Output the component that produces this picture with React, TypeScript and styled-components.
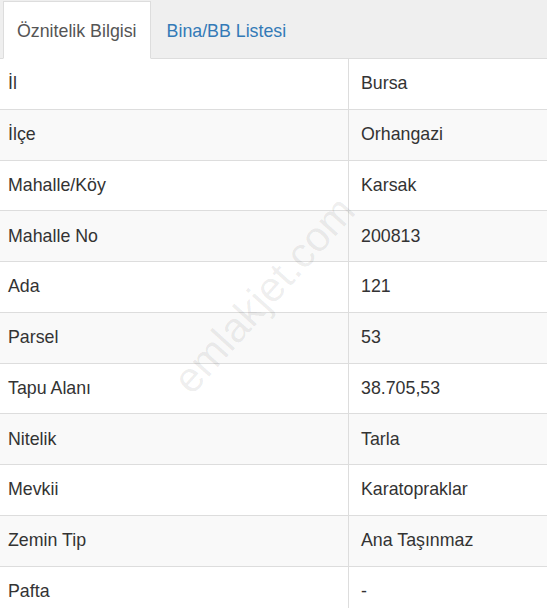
import React from "react";
import styled, { createGlobalStyle } from "styled-components";

const Global = createGlobalStyle`
  html, body { margin: 0; padding: 0; background: #fff; }
  body { font-family: "Liberation Sans", Arial, sans-serif; color: #333; }
`;

const Page = styled.div`
  position: relative;
  width: 547px;
  height: 608px;
  overflow: hidden;
  background: #fff;
`;

const TabBar = styled.div`
  display: flex;
  align-items: flex-end;
  height: 59px;
  padding: 0 0 0 3px;
  background: #efefef;
  border-bottom: 1px solid #ddd;
  box-sizing: border-box;
`;

const Tab = styled.div<{ $active?: boolean }>`
  height: ${(p) => (p.$active ? "58px" : "56px")};
  box-sizing: border-box;
  display: flex;
  align-items: center;
  padding: 2px 13px 0 ${(p) => (p.$active ? "13px" : "15px")};
  font-size: 17.8px;
  margin-bottom: ${(p) => (p.$active ? "-1px" : "0")};
  background: ${(p) => (p.$active ? "#fff" : "transparent")};
  color: ${(p) => (p.$active ? "#555" : "#337ab7")};
  border: 1px solid ${(p) => (p.$active ? "#ddd" : "transparent")};
  border-bottom-color: ${(p) => (p.$active ? "#fff" : "transparent")};
`;

const Table = styled.div`
  display: grid;
  grid-template-columns: 348px 1fr;
`;

const Cell = styled.div<{ $odd: boolean; $value?: boolean }>`
  height: 50.75px;
  box-sizing: border-box;
  display: flex;
  align-items: center;
  padding-left: ${(p) => (p.$value ? "12px" : "8px")};
  font-size: 17.8px;
  color: #333;
  background: ${(p) => (p.$odd ? "#f9f9f9" : "#fff")};
  border-bottom: 1px solid #ddd;
  border-left: ${(p) => (p.$value ? "1px solid #ddd" : "none")};
`;

const Watermark = styled.div`
  position: absolute;
  left: 264px;
  top: 295px;
  transform: translate(-50%, -50%) rotate(-48deg);
  font-size: 42px;
  color: rgba(0, 0, 0, 0.07);
  white-space: nowrap;
  pointer-events: none;
  font-family: "Liberation Sans", Arial, sans-serif;
`;

const rows: [string, string][] = [
  ["İl", "Bursa"],
  ["İlçe", "Orhangazi"],
  ["Mahalle/Köy", "Karsak"],
  ["Mahalle No", "200813"],
  ["Ada", "121"],
  ["Parsel", "53"],
  ["Tapu Alanı", "38.705,53"],
  ["Nitelik", "Tarla"],
  ["Mevkii", "Karatopraklar"],
  ["Zemin Tip", "Ana Taşınmaz"],
  ["Pafta", "-"],
];

export default function App() {
  return (
    <Page>
      <Global />
      <TabBar>
        <Tab $active>Öznitelik Bilgisi</Tab>
        <Tab>Bina/BB Listesi</Tab>
      </TabBar>
      <Table>
        {rows.map(([k, v], i) => (
          <React.Fragment key={k}>
            <Cell $odd={i % 2 === 1}>{k}</Cell>
            <Cell $odd={i % 2 === 1} $value>
              {v}
            </Cell>
          </React.Fragment>
        ))}
      </Table>
      <Watermark>emlakjet.com</Watermark>
    </Page>
  );
}
